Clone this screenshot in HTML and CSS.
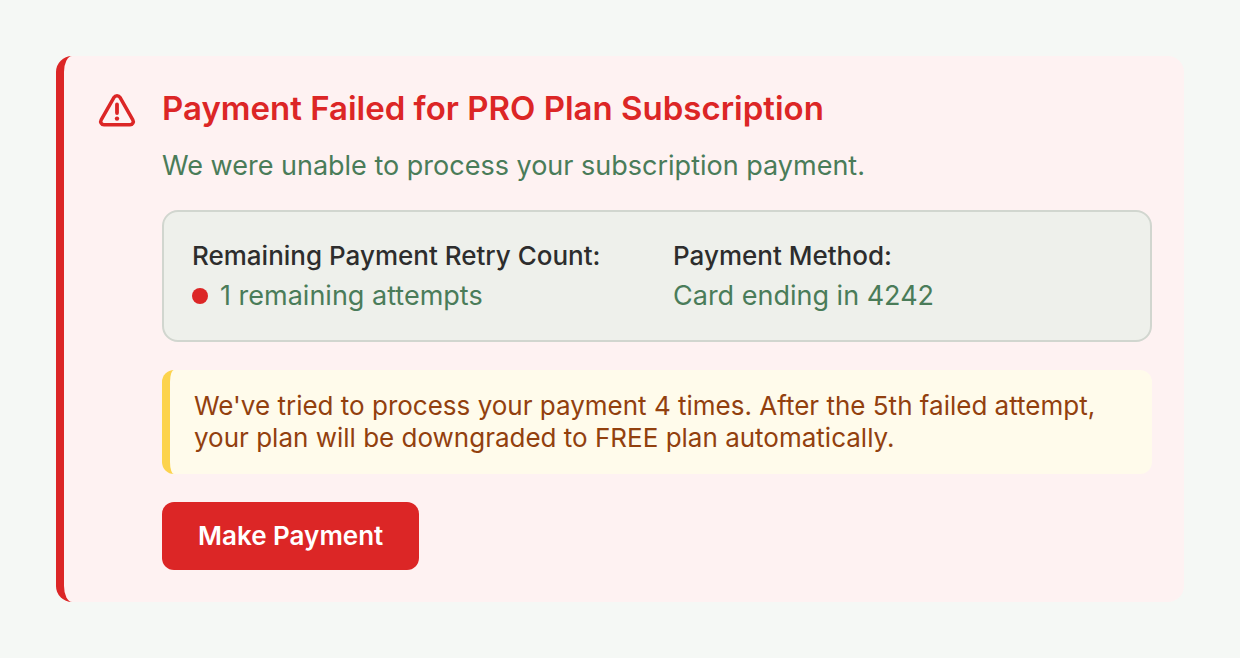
FILE: index.html
```html
<!DOCTYPE html>
<html lang="en">
<head>
<meta charset="UTF-8">
<meta name="viewport" content="width=device-width, initial-scale=1.0">
<title>Payment Failed</title>
<link rel="stylesheet" href="styles.css">
</head>
<body>

<div class="alert">
  <svg class="alert-icon" viewBox="0 0 42 42" fill="none" stroke="currentColor" stroke-linecap="round" stroke-linejoin="round" aria-hidden="true">
    <path stroke-width="3.5" d="M18 9.3 5.2 31.8C3.9 34.1 5.4 36.8 8 36.8H34C36.6 36.8 38.1 34.1 36.8 31.8L24 9.3C22.7 7.1 19.3 7.1 18 9.3Z"/>
    <path stroke-width="3.8" d="M21 16.5V25"/>
    <circle cx="21" cy="30.6" r="2.2" fill="currentColor" stroke="none"/>
  </svg>
  <div class="alert-content">
    <h1>Payment Failed for PRO Plan Subscription</h1>
    <p class="message">We were unable to process your subscription payment.</p>

    <div class="details">
      <div>
        <h2>Remaining Payment Retry Count:</h2>
        <p class="attempts"><span class="dot"></span>1 remaining attempts</p>
      </div>
      <div>
        <h2>Payment Method:</h2>
        <p>Card ending in 4242</p>
      </div>
    </div>

    <p class="warning">We've tried to process your payment 4 times. After the 5th failed attempt, your plan will be downgraded to FREE plan automatically.</p>

    <button type="button" class="pay-button">Make Payment</button>
  </div>
</div>

</body>
</html>
```
FILE: styles.css
```css
* {
  box-sizing: border-box;
}

body {
  margin: 0;
  padding: 56px;
  font-family: Inter, sans-serif;
  background-color: #f5f8f5;
}

h1,
h2,
p {
  margin: 0;
}

.alert {
  display: flex;
  gap: 24px;
  padding: 32px;
  border-left: 8px solid #dc2626;
  border-radius: 16px;
  background-color: #fef2f2;
  color: #4a7c59;
}

.alert-icon {
  flex: none;
  width: 42px;
  height: 42px;
  color: #dc2626;
}

.alert-content {
  flex: 1;
}

h1 {
  font-size: 33px;
  line-height: 40px;
  font-weight: 600;
  color: #dc2626;
}

.message {
  margin-top: 20px;
  font-size: 27px;
  line-height: 36px;
}

.details {
  display: grid;
  grid-template-columns: 1fr 1fr;
  gap: 32px;
  margin-top: 26px;
  padding: 26px 28px;
  border: 2px solid #d1d6cf;
  border-radius: 16px;
  background-color: #eef0eb;
  font-size: 27px;
  line-height: 36px;
}

h2 {
  margin-bottom: 4px;
  font-size: 26px;
  line-height: 36px;
  font-weight: 500;
  color: #2d2d2d;
}

.attempts {
  display: flex;
  align-items: center;
  gap: 12px;
}

.dot {
  width: 16px;
  height: 16px;
  border-radius: 50%;
  background-color: #dc2626;
}

.warning {
  margin-top: 28px;
  padding: 20px 24px;
  border-left: 8px solid #fcd34d;
  border-radius: 12px;
  background-color: #fffbeb;
  font-size: 26px;
  line-height: 32px;
  color: #92400e;
}

.pay-button {
  margin-top: 28px;
  padding: 16px 36px;
  border: none;
  border-radius: 12px;
  background-color: #dc2626;
  font-family: inherit;
  font-size: 26px;
  line-height: 36px;
  font-weight: 600;
  color: #fff;
  cursor: pointer;
}
```
